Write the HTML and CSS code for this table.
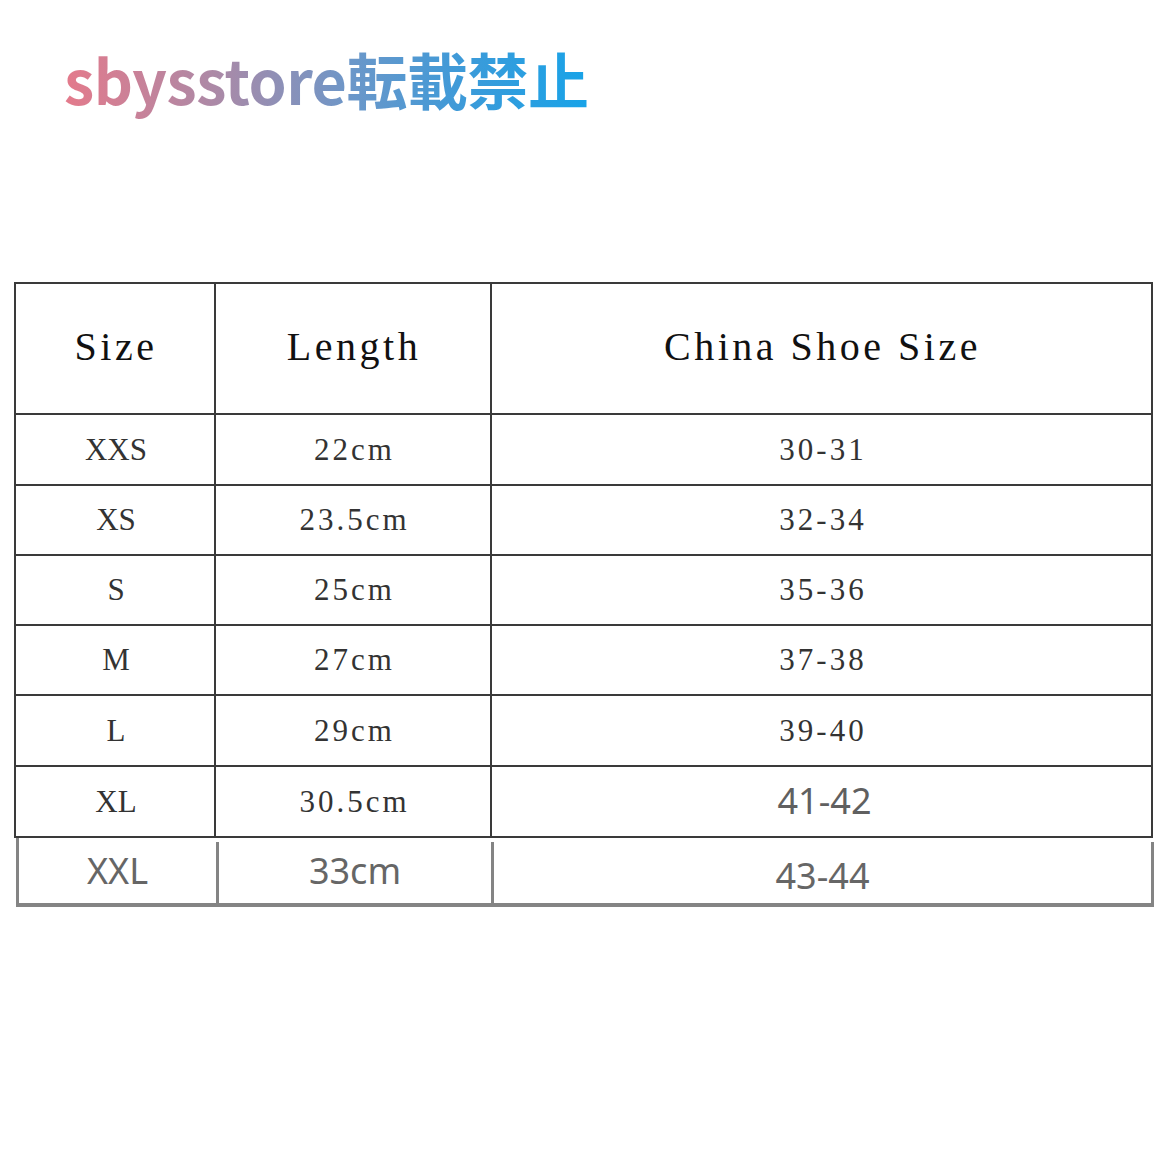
FILE: index.html
```html
<!DOCTYPE html>
<html lang="ja">
<head>
<meta charset="utf-8">
<title>Size chart</title>
<link rel="stylesheet" href="styles.css">
</head>
<body>
<div class="page">
  <h1 class="brand"><span class="brand-text">sbysstore転載禁止</span></h1>
  <div class="chart">
    <div class="grid">
      <div class="cell head">Size</div>
      <div class="cell head">Length</div>
      <div class="cell head wide">China Shoe Size</div>

      <div class="cell size">XXS</div><div class="cell num">22cm</div><div class="cell num">30-31</div>
      <div class="cell size">XS</div><div class="cell num">23.5cm</div><div class="cell num">32-34</div>
      <div class="cell size">S</div><div class="cell num">25cm</div><div class="cell num">35-36</div>
      <div class="cell size">M</div><div class="cell num">27cm</div><div class="cell num">37-38</div>
      <div class="cell size">L</div><div class="cell num">29cm</div><div class="cell num">39-40</div>
      <div class="cell size">XL</div><div class="cell num">30.5cm</div><div class="cell sans">41-42</div>
    </div>
    <div class="extra">
      <div class="xcell">XXL</div>
      <div class="xcell">33cm</div>
      <div class="xcell low">43-44</div>
    </div>
  </div>
</div>
</body>
</html>
```

FILE: styles.css
```css
html, body {
  margin: 0;
  padding: 0;
  background: #ffffff;
}

.page {
  width: 1170px;
  height: 1149px;
  overflow: hidden;
}

.brand {
  margin: 0;
  padding: 44px 0 0 64px;
  height: 282px;
  box-sizing: border-box;
  font-family: "Noto Sans CJK JP", "Noto Sans", sans-serif;
  font-weight: 700;
  font-size: 61px;
  line-height: 70px;
  letter-spacing: -0.5px;
}

.brand-text {
  background: linear-gradient(90deg, #e47a8b 0%, #a98aa8 30%, #6b97c9 55%, #3f9ad8 75%, #17a3e8 100%);
  -webkit-background-clip: text;
  background-clip: text;
  color: transparent;
}

.chart {
  margin-left: 14px;
}

.grid {
  display: grid;
  grid-template-columns: 200px 276px 661px;
  grid-template-rows: 131px 71px 70px 70px 70px 71px 71px;
  border-top: 2px solid #3a3a3a;
  border-left: 2px solid #3a3a3a;
  width: 1139px;
  box-sizing: border-box;
}

.cell {
  box-sizing: border-box;
  border-right: 2px solid #3a3a3a;
  border-bottom: 2px solid #3a3a3a;
  display: flex;
  align-items: center;
  justify-content: center;
  font-family: "Liberation Serif", serif;
  font-size: 31px;
  letter-spacing: 0.5px;
  color: #333333;
  padding-left: 2px;
}

.cell.size {
  letter-spacing: 0;
}

.cell.num {
  letter-spacing: 3px;
  padding-left: 3px;
}

.cell.head {
  font-size: 40px;
  letter-spacing: 3.5px;
  color: #111111;
  padding-bottom: 4px;
}

.cell.sans {
  font-family: "Noto Sans", "Liberation Sans", sans-serif;
  font-size: 36px;
  letter-spacing: 0;
  color: #606060;
  padding-left: 6px;
  padding-bottom: 2px;
}

.extra {
  display: grid;
  grid-template-columns: 200px 275px 660px;
  height: 69px;
  width: 1138px;
  margin-left: 2px;
  box-sizing: border-box;
  border-left: 3px solid #848484;
  border-bottom: 4px solid #848484;
}

.xcell {
  box-sizing: border-box;
  border-right: 3px solid #848484;
  margin-top: 4px;
  display: flex;
  align-items: center;
  justify-content: center;
  font-family: "Noto Sans", "Liberation Sans", sans-serif;
  font-size: 36px;
  color: #666666;
  padding-bottom: 4px;
}

.xcell.low {
  padding-bottom: 0;
  padding-top: 6px;
}
```
